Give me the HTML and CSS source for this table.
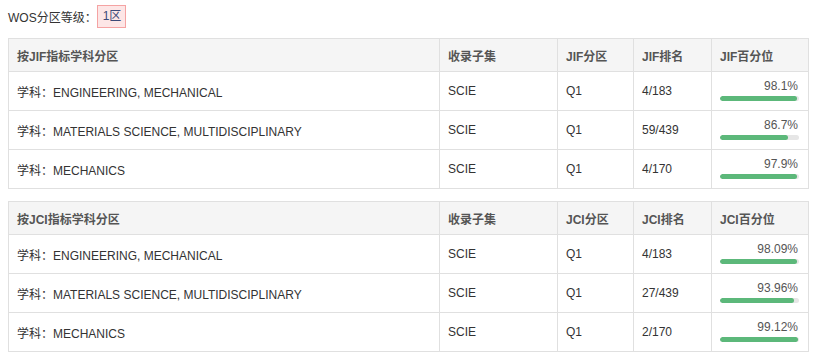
FILE: index.html
```html
<!DOCTYPE html>
<html lang="zh">
<head>
<meta charset="utf-8">
<link rel="stylesheet" href="styles.css">
</head>
<body>
<div class="grade">
  <span class="grade-label">WOS分区等级：</span>
  <span class="badge">1区</span>
</div>

<table class="zone">
  <colgroup>
    <col class="c1"><col class="c2"><col class="c3"><col class="c4"><col class="c5">
  </colgroup>
  <thead>
    <tr><th>按JIF指标学科分区</th><th>收录子集</th><th>JIF分区</th><th>JIF排名</th><th>JIF百分位</th></tr>
  </thead>
  <tbody>
    <tr><td>学科：ENGINEERING, MECHANICAL</td><td>SCIE</td><td>Q1</td><td>4/183</td>
      <td class="pct"><div class="pct-val">98.1%</div><div class="bar"><div class="fill" style="width:98.1%"></div></div></td></tr>
    <tr><td>学科：MATERIALS SCIENCE, MULTIDISCIPLINARY</td><td>SCIE</td><td>Q1</td><td>59/439</td>
      <td class="pct"><div class="pct-val">86.7%</div><div class="bar"><div class="fill" style="width:86.7%"></div></div></td></tr>
    <tr><td>学科：MECHANICS</td><td>SCIE</td><td>Q1</td><td>4/170</td>
      <td class="pct"><div class="pct-val">97.9%</div><div class="bar"><div class="fill" style="width:97.9%"></div></div></td></tr>
  </tbody>
</table>

<table class="zone">
  <colgroup>
    <col class="c1"><col class="c2"><col class="c3"><col class="c4"><col class="c5">
  </colgroup>
  <thead>
    <tr><th>按JCI指标学科分区</th><th>收录子集</th><th>JCI分区</th><th>JCI排名</th><th>JCI百分位</th></tr>
  </thead>
  <tbody>
    <tr><td>学科：ENGINEERING, MECHANICAL</td><td>SCIE</td><td>Q1</td><td>4/183</td>
      <td class="pct"><div class="pct-val">98.09%</div><div class="bar"><div class="fill" style="width:98.09%"></div></div></td></tr>
    <tr><td>学科：MATERIALS SCIENCE, MULTIDISCIPLINARY</td><td>SCIE</td><td>Q1</td><td>27/439</td>
      <td class="pct"><div class="pct-val">93.96%</div><div class="bar"><div class="fill" style="width:93.96%"></div></div></td></tr>
    <tr><td>学科：MECHANICS</td><td>SCIE</td><td>Q1</td><td>2/170</td>
      <td class="pct"><div class="pct-val">99.12%</div><div class="bar"><div class="fill" style="width:99.12%"></div></div></td></tr>
  </tbody>
</table>
</body>
</html>
```

FILE: styles.css
```css
body {
  margin: 0;
  padding: 5px 8px 0;
  font-family: "Liberation Sans", Arial, "Noto Sans CJK SC", sans-serif;
  font-size: 12px;
  color: #333;
  background: #fff;
}

.grade {
  display: flex;
  align-items: center;
  height: 23px;
}

.grade-label {
  color: #333;
}

.badge {
  margin-left: 0;
  box-sizing: border-box;
  height: 23px;
  line-height: 21px;
  padding: 0 4px 0 5px;
  border: 1px solid #f5a3a3;
  background: #fde6e6;
  color: #3c4a78;
}

.zone {
  width: 800px;
  border-collapse: collapse;
  table-layout: fixed;
  margin-top: 10px;
}

.zone + .zone {
  margin-top: 12px;
}

.c1 { width: 431px; }
.c2 { width: 118px; }
.c3 { width: 76px; }
.c4 { width: 78px; }
.c5 { width: 97px; }

.zone th,
.zone td {
  border: 1px solid #e0e0e0;
  padding: 0 8px;
  text-align: left;
  vertical-align: middle;
  white-space: nowrap;
}

.zone th {
  height: 32px;
  background: #f5f5f5;
  color: #555;
  font-weight: bold;
}

.zone td {
  height: 38px;
}

.zone td.pct {
  padding: 0 9px 0 8px;
}

.pct-val {
  text-align: right;
  line-height: 14px;
  color: #555;
  padding-right: 1px;
}

.bar {
  margin-top: 3px;
  height: 5px;
  border-radius: 3px;
  background: #e6e6e6;
  overflow: hidden;
  margin-bottom: 2px;
}

.fill {
  height: 100%;
  border-radius: 3px;
  background: #5cb87a;
}
```
